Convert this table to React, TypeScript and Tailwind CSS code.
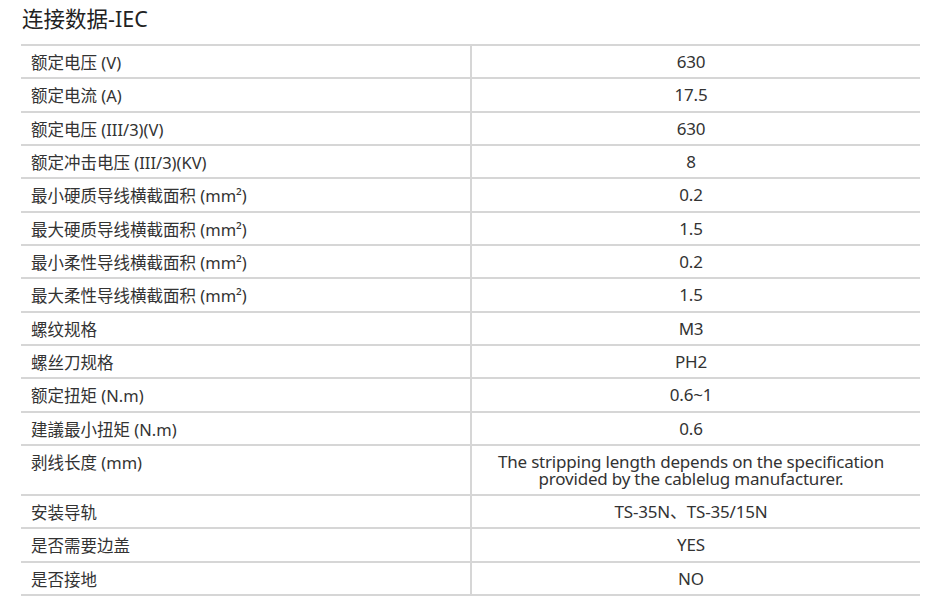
const rows: { label: string; value: string; tall?: boolean }[] = [
  { label: "额定电压 (V)", value: "630" },
  { label: "额定电流 (A)", value: "17.5" },
  { label: "额定电压 (III/3)(V)", value: "630" },
  { label: "额定冲击电压 (III/3)(KV)", value: "8" },
  { label: "最小硬质导线横截面积 (mm²)", value: "0.2" },
  { label: "最大硬质导线横截面积 (mm²)", value: "1.5" },
  { label: "最小柔性导线横截面积 (mm²)", value: "0.2" },
  { label: "最大柔性导线横截面积 (mm²)", value: "1.5" },
  { label: "螺纹规格", value: "M3" },
  { label: "螺丝刀规格", value: "PH2" },
  { label: "额定扭矩 (N.m)", value: "0.6~1" },
  { label: "建議最小扭矩 (N.m)", value: "0.6" },
  {
    label: "剥线长度 (mm)",
    value:
      "The stripping length depends on the specification provided by the cablelug manufacturer.",
    tall: true,
  },
  { label: "安装导轨", value: "TS-35N、TS-35/15N" },
  { label: "是否需要边盖", value: "YES" },
  { label: "是否接地", value: "NO" },
];

export default function App() {
  return (
    <div
      className="w-[940px] h-[609px] bg-white text-[#333]"
      style={{ fontFamily: '"Noto Sans", "Noto Sans CJK SC", sans-serif' }}
    >
      <div className="pl-[22px] pt-[5px] h-[44px] text-[21.5px] leading-[28px] text-[#222]">
        连接数据-IEC
      </div>
      <div className="ml-[21px] w-[899px] border-t-2 border-[#d6d6d6]">
        {rows.map((r) => (
          <div
            key={r.label}
            className={`flex border-b-2 border-[#d6d6d6] ${r.tall ? "h-[50px]" : "h-[33.33px]"}`}
          >
            <div className="w-[449px] shrink-0 pl-[10px] pt-[7px] text-[16.5px] leading-[19px]">
              {r.label}
            </div>
            <div className="flex-1 border-l-2 border-[#d6d6d6] pt-[7px] pl-[10px] pr-[20px] text-center text-[17px] leading-[17px] tracking-[-0.2px]">
              {r.value}
            </div>
          </div>
        ))}
      </div>
    </div>
  );
}
